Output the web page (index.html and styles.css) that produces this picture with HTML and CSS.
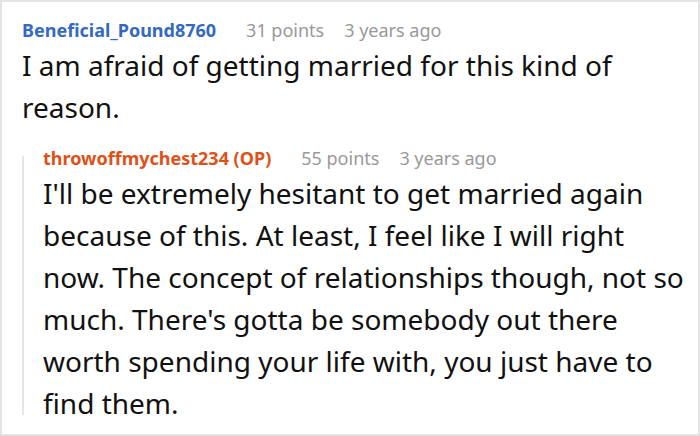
FILE: index.html
```html
<!DOCTYPE html>
<html>
<head>
<meta charset="utf-8">
<link rel="stylesheet" href="styles.css">
</head>
<body>
<div class="thread">
  <div class="comment">
    <div class="meta">
      <span class="author blue">Beneficial_Pound8760</span>
      <span class="info">31 points</span>
      <span class="info">3 years ago</span>
    </div>
    <p class="text">I am afraid of getting married for this kind of reason.</p>
    <div class="reply">
      <div class="meta">
        <span class="author orange">throwoffmychest234 (OP)</span>
        <span class="info">55 points</span>
        <span class="info">3 years ago</span>
      </div>
      <p class="text">I'll be extremely hesitant to get married again because of this. At least, I feel like I will right now. The concept of relationships though, not so much. There's gotta be somebody out there worth spending your life with, you just have to find them.</p>
    </div>
  </div>
</div>
</body>
</html>
```
FILE: styles.css
```css
html, body {
  margin: 0;
  padding: 0;
  background: #fff;
}
.thread {
  box-sizing: border-box;
  width: 700px;
  height: 436px;
  border: 2px solid #e4e4e4;
  padding: 14px 8px 0 20px;
  overflow: hidden;
  font-family: "Noto Sans", sans-serif;
}
.meta {
  display: flex;
  gap: 20px;
  font-size: 18px;
  line-height: 28px;
}
.author {
  font-weight: bold;
  margin-right: 10px;
}
.blue { color: #336ac0; }
.orange { color: #de5118; }
.info { color: #999; }
.text {
  margin: 0;
  font-size: 28px;
  line-height: 42px;
  color: #111;
}
.reply {
  margin-top: 16px;
  padding-left: 21px;
  background: linear-gradient(#e6e6e6, #e6e6e6) no-repeat 0 12px / 2px calc(100% - 21px);
}
```
